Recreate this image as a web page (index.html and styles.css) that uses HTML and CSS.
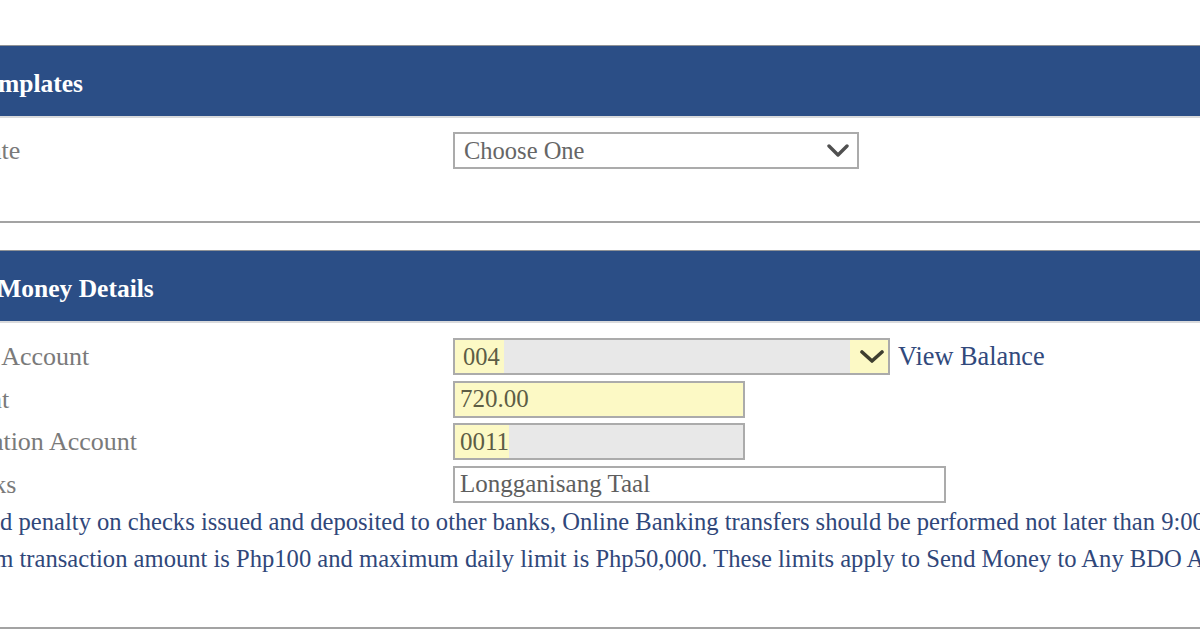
FILE: index.html
```html
<!DOCTYPE html>
<html lang="en">
<head>
<meta charset="utf-8">
<title>Send Money</title>
<link rel="stylesheet" href="styles.css">
</head>
<body>
<div class="page">
  <section class="section section--templates">
    <h2 class="band"><span class="band-title band-title--templates">Templates</span></h2>
    <div class="rows rows--templates">
      <div class="row">
        <label class="label">Template</label>
        <div class="field">
          <div class="select select--plain">
            <span class="select-text">Choose One</span>
            <svg class="chevron" width="22" height="14" viewBox="0 0 22 14"><polyline points="2,2 11,11 20,2" fill="none" stroke="#505050" stroke-width="3.4" stroke-linecap="round" stroke-linejoin="round"/></svg>
          </div>
        </div>
      </div>
    </div>
    <hr class="divider">
  </section>

  <section class="section section--details">
    <h2 class="band"><span class="band-title">Send Money Details</span></h2>
    <div class="rows">
      <div class="row">
        <label class="label">Source Account</label>
        <div class="field">
          <div class="select select--filled select--wide">
            <span class="select-text">004</span>
            <span class="masked masked--select"></span>
            <svg class="chevron chevron--dark" width="24" height="14" viewBox="0 0 24 14"><polyline points="2,2 12,11 22,2" fill="none" stroke="#3e3e30" stroke-width="3.6" stroke-linecap="round" stroke-linejoin="round"/></svg>
          </div>
          <a class="link" href="#">View Balance</a>
        </div>
      </div>
      <div class="row">
        <label class="label">Amount</label>
        <div class="field">
          <div class="input input--filled input--mid"><span class="input-text">720.00</span></div>
        </div>
      </div>
      <div class="row">
        <label class="label">Destination Account</label>
        <div class="field">
          <div class="input input--filled input--mid"><span class="input-text">0011</span><span class="masked"></span></div>
        </div>
      </div>
      <div class="row">
        <label class="label">Remarks</label>
        <div class="field">
          <div class="input input--long"><span class="input-text input-text--plain">Longganisang Taal</span></div>
        </div>
      </div>
    </div>
    <div class="notes">
      <p class="note">To avoid penalty on checks issued and deposited to other banks, Online Banking transfers should be performed not later than 9:00 PM.</p>
      <p class="note note--shifted">Minimum transaction amount is Php100 and maximum daily limit is Php50,000. These limits apply to Send Money to Any BDO Account.</p>
    </div>
    <hr class="divider divider--bottom">
  </section>
</div>
</body>
</html>
```

FILE: styles.css
```css
html, body {
  margin: 0;
  padding: 0;
  background: #ffffff;
  overflow: hidden;
}

body {
  width: 1200px;
  height: 642px;
  font-family: "Liberation Serif", "Times New Roman", serif;
  font-size: 25px;
}

.page {
  margin-left: -74px;
  width: 1400px;
  padding-top: 45px;
}

.section {
  display: block;
}

.section--details {
  margin-top: 27px;
}

.band {
  margin: 0;
  box-sizing: border-box;
  height: 73px;
  padding: 6px 0 0 11px;
  display: flex;
  align-items: center;
  background: #2b4e86;
  border-top: 1px solid #8f9296;
  border-bottom: 2px solid #d9dadc;
  color: #ffffff;
  font-size: 25.5px;
  font-weight: bold;
}

.band-title--templates {
  padding-left: 35px;
}

.rows {
  display: flex;
  flex-direction: column;
  gap: 5.5px;
  padding-top: 15px;
}

.rows--templates {
  padding-top: 14px;
}

.row {
  display: grid;
  grid-template-columns: 527px 1fr;
  align-items: center;
  height: 37px;
}

.label {
  color: #7a7a7a;
  font-size: 26px;
  white-space: nowrap;
  margin-left: -2px;
  padding-top: 1px;
}

.field {
  display: flex;
  align-items: center;
  height: 100%;
}

.select,
.input {
  box-sizing: border-box;
  height: 100%;
  border: 2px solid #ababab;
  display: flex;
  align-items: center;
  position: relative;
  overflow: hidden;
}

.select--plain {
  width: 406px;
  background: #ffffff;
  padding: 0 8px 0 9px;
  justify-content: space-between;
}

.select--filled {
  background: #fcf9c5;
}

.select--wide {
  width: 437px;
  padding: 0 0 0 8px;
}

.select-text {
  color: #666666;
  font-size: 24.5px;
  white-space: nowrap;
}

.select--filled .select-text {
  color: #5d5d45;
}

.chevron {
  flex: none;
}

.chevron--dark {
  margin-left: auto;
  margin-right: 4px;
}

.masked {
  align-self: stretch;
  flex: 1;
  background: #e8e8e8;
}

.masked--select {
  flex: none;
  width: 346px;
  margin-left: 4px;
}

.link {
  margin-left: 8px;
  color: #31497c;
  text-decoration: none;
  font-size: 26.3px;
  white-space: nowrap;
}

.input {
  padding-left: 5px;
}

.input--filled {
  background: #fcf9c5;
}

.input--mid {
  width: 292px;
}

.input--long {
  width: 493px;
  background: #ffffff;
}

.input-text {
  color: #5d5d45;
  font-size: 25px;
  white-space: nowrap;
}

.input-text--plain {
  color: #5e5e5e;
}

.notes {
  margin-top: 0;
}

.note {
  margin: 0;
  color: #30477a;
  font-size: 24.6px;
  line-height: 37px;
  white-space: nowrap;
}

.note--shifted {
  margin-left: -11px;
}

.divider {
  margin: 52px 0 0 0;
  height: 0;
  border: 0;
  border-top: 2px solid #a3a3a3;
}

.divider--bottom {
  margin-top: 50px;
}
```
